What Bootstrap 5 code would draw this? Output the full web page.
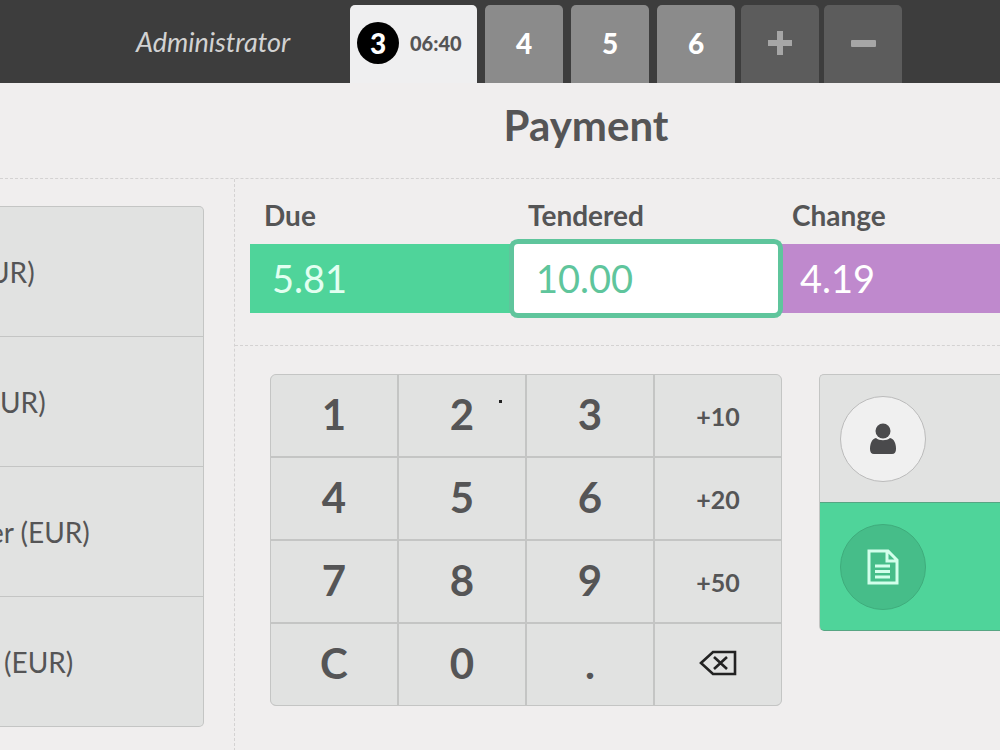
<!DOCTYPE html>
<html lang="en">
<head>
<meta charset="utf-8">
<meta name="viewport" content="width=device-width, initial-scale=1">
<title>Payment</title>
<link href="https://cdn.jsdelivr.net/npm/bootstrap@5.3.0/dist/css/bootstrap.min.css" rel="stylesheet">
<style>
  :root { --ink: #555556; --line: #c4c5c4; --key: #e1e2e1; --dash: #d4d2d2; --mint: #4fd49a; --teal: #5fc59c; }
  body { font-family: Lato, "Liberation Sans", sans-serif; background: #f0eeee; color: var(--ink); overflow-x: hidden; }
  button { font-family: inherit; color: inherit; }
  .topbar { height: 83px; background: #3d3d3d; padding: 5px 0 0 136px; }
  .user-name { width: 214px; font-size: 27px; line-height: 74px; font-style: italic; color: #d2d2d2; }
  .order-tab { width: 78px; margin-right: 8px; border: 0; border-radius: 5px 5px 0 0; background: #8b8b8b; color: #fff; font-size: 28px; font-weight: 900; line-height: 76px; padding: 0 0 2px; }
  .order-tab.current { width: 127px; background: #efeff0; color: var(--ink); padding: 0 7px 2px; }
  .order-tab.tool { background: #5c5c5c; margin-right: 5px; }
  .order-tab.last-order { margin-right: 6px; }
  .order-num { width: 42px; height: 42px; background: #000; color: #fff; line-height: 42px; flex-shrink: 0; }
  .order-time { font-size: 20px; margin-left: 11px; line-height: 72px; }
  .screen-head { height: 96px; padding: 0 0 12px 172px; border-bottom: 1px dashed var(--dash); }
  .screen-head h1 { font-size: 42px; font-weight: 700; line-height: 50px; }
  .methods { width: 235px; border-right: 1px dashed var(--dash); padding: 27px 30px 24px 0; }
  .method-list { border: 1px solid var(--line); border-left: 0; border-radius: 0 5px 5px 0; background: var(--key); }
  .method { height: 129px; border: 0; background: none; font-size: 28px; padding: 0; white-space: nowrap; }
  .method + .method { border-top: 1px solid var(--line); height: 130px; }
  .cut { margin-left: -11px; }
  .amounts { display: grid; grid-template-columns: 264fr 264fr 222fr; padding: 19px 0 32px 15px; border-bottom: 1px dashed var(--dash); }
  .amount-label { font-size: 28px; font-weight: 700; line-height: 34px; padding-left: 14px; margin-bottom: 12px; }
  .amount { height: 69px; width: 100%; border: 0; font-size: 38px; line-height: 69px; padding: 0 22px; color: #fff; }
  .due { background: var(--mint); color: #e2fff1; }
  .change { background: #bf89cd; }
  .tendered { background: #fff; color: var(--teal); border-radius: 4px; box-shadow: 0 0 0 5px var(--teal); position: relative; outline: 0; }
  .lower { padding: 28px 0 44px 35px; gap: 37px; }
  .keypad { flex: 0 1 512px; display: grid; grid-template-columns: repeat(4, 1fr); gap: 2px; background: var(--line); border: 1px solid var(--line); border-radius: 6px; overflow: hidden; }
  .key { height: 81px; border: 0; background: var(--key); font-size: 42px; font-weight: 700; line-height: 50px; padding: 0 0 3px; }
  .key.quick { font-size: 25px; padding: 0; }
  .cursor-dot { width: 3px; height: 3px; background: #222; right: 23px; top: 25px; }
  .side { border: 1px solid var(--line); border-right: 0; border-bottom: 0; border-radius: 5px 0 0 5px; background: var(--key); overflow: hidden; }
  .option { height: 127px; border: 0; background: none; padding: 0 20px; }
  .invoice-wrap { margin-left: -1px; border: 1px solid #57a583; border-right: 0; border-radius: 0 0 0 5px; background: var(--mint); }
  .disc { width: 86px; height: 86px; border: 1px solid #bbb; background: #f0f0f0; }
  .chosen .disc { background: #46bd89; border-color: #3fac7c; }
</style>
</head>
<body>
<div class="d-flex flex-column min-vh-100">
  <header class="topbar d-flex">
    <div class="user-name">Administrator</div>
    <button class="order-tab current d-flex align-items-center"><span class="order-num rounded-circle">3</span><span class="order-time">06:40</span></button>
    <button class="order-tab">4</button>
    <button class="order-tab">5</button>
    <button class="order-tab last-order">6</button>
    <button class="order-tab tool d-flex align-items-center justify-content-center" aria-label="New order"><svg width="26" height="26" viewBox="0 0 26 26" fill="#a6a6a6"><path d="M10 1h6v9h9v6h-9v9h-6v-9H1v-6h9z"/></svg></button>
    <button class="order-tab tool d-flex align-items-center justify-content-center" aria-label="Delete order"><svg width="26" height="26" viewBox="0 0 26 26" fill="#a6a6a6"><rect x="1" y="10" width="25" height="7" rx="1"/></svg></button>
  </header>
  <div class="screen-head d-flex align-items-center justify-content-center"><h1 class="m-0">Payment</h1></div>
  <main class="d-flex flex-grow-1">
    <section class="methods flex-shrink-0">
      <div class="method-list d-flex flex-column overflow-hidden">
        <button class="method text-start"><span class="cut">UR)</span></button>
        <button class="method text-start">UR)</button>
        <button class="method text-start"><span class="cut">er (EUR)</span></button>
        <button class="method text-start ps-1">(EUR)</button>
      </div>
    </section>
    <div class="flex-grow-1">
      <section class="amounts">
        <div><div class="amount-label">Due</div><div class="amount due">5.81</div></div>
        <div><label class="amount-label d-block" for="tendered">Tendered</label><input class="amount tendered d-block" id="tendered" type="text" value="10.00"></div>
        <div><div class="amount-label">Change</div><div class="amount change">4.19</div></div>
      </section>
      <section class="lower d-flex align-items-start">
        <div class="keypad">
          <button class="key">1</button>
          <button class="key position-relative">2<span class="cursor-dot position-absolute"></span></button>
          <button class="key">3</button>
          <button class="key quick">+10</button>
          <button class="key">4</button><button class="key">5</button><button class="key">6</button>
          <button class="key quick">+20</button>
          <button class="key">7</button><button class="key">8</button><button class="key">9</button>
          <button class="key quick">+50</button>
          <button class="key">C</button><button class="key">0</button><button class="key">.</button>
          <button class="key d-flex align-items-center justify-content-center" aria-label="Backspace"><svg width="38" height="26" viewBox="0 0 38 26" fill="none" stroke="#222" stroke-width="2.6"><path d="M2 13 14 2H36V24H14ZM15 7 28 19M28 7 15 19"/></svg></button>
        </div>
        <div class="side flex-grow-1">
          <button class="option d-flex align-items-center w-100" aria-label="Customer"><span class="disc rounded-circle d-flex align-items-center justify-content-center"><svg width="26" height="32" viewBox="0 0 26 32" fill="#4a4a4c"><circle cx="13" cy="8" r="7.500"/><path d="M6 15C9 18 17 18 20 15C24 16 26 20 26 26Q26 31 22 31H4Q0 31 0 26C0 20 2 16 6 15Z"/></svg></span></button>
          <div class="invoice-wrap"><button class="option chosen d-flex align-items-center w-100" aria-label="Invoice"><span class="disc rounded-circle d-flex align-items-center justify-content-center"><svg width="32" height="36" viewBox="0 0 32 36" fill="none" stroke="#d2ffeb" stroke-width="3"><path d="M2 2H21L30 11V34H2ZM20 2V12H30M8 17H23M8 22.500H23M8 28H23"/></svg></span></button></div>
        </div>
      </section>
    </div>
  </main>
</div>
<script src="https://cdn.jsdelivr.net/npm/bootstrap@5.3.0/dist/js/bootstrap.bundle.min.js"></script>
</body>
</html>
